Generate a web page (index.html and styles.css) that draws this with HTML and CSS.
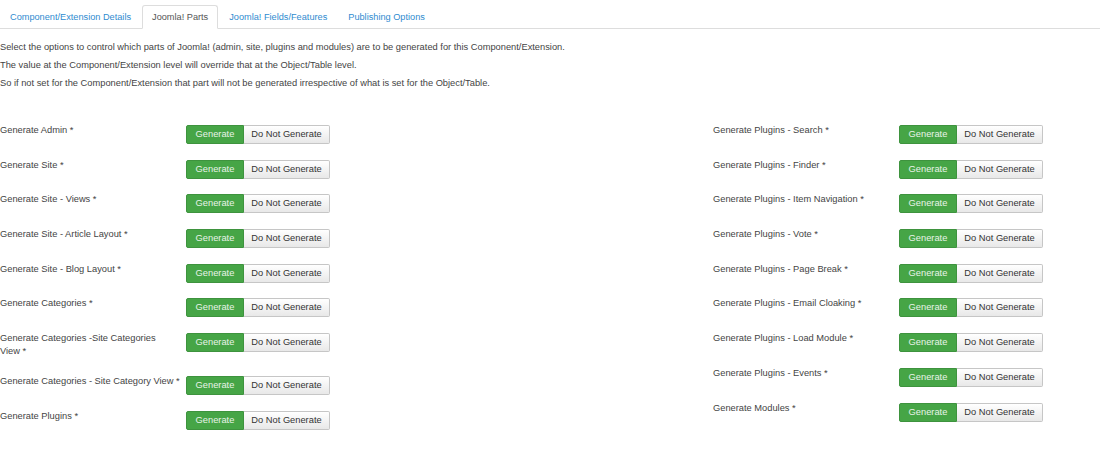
FILE: index.html
```html
<!DOCTYPE html>
<html>
<head>
<meta charset="utf-8">
<link rel="stylesheet" href="styles.css">
</head>
<body>
<ul class="tabs">
  <li class="tab"><a>Component/Extension Details</a></li>
  <li class="tab active"><a>Joomla! Parts</a></li>
  <li class="tab"><a>Joomla! Fields/Features</a></li>
  <li class="tab"><a>Publishing Options</a></li>
</ul>
<div class="intro">
  <p>Select the options to control which parts of Joomla! (admin, site, plugins and modules) are to be generated for this Component/Extension.</p>
  <p>The value at the Component/Extension level will override that at the Object/Table level.</p>
  <p>So if not set for the Component/Extension that part will not be generated irrespective of what is set for the Object/Table.</p>
</div>
<div class="form">
  <div class="col left">
    <div class="group"><div class="label">Generate Admin *</div><div class="btns"><span class="btn on">Generate</span><span class="btn off">Do Not Generate</span></div></div>
    <div class="group"><div class="label">Generate Site *</div><div class="btns"><span class="btn on">Generate</span><span class="btn off">Do Not Generate</span></div></div>
    <div class="group"><div class="label">Generate Site - Views *</div><div class="btns"><span class="btn on">Generate</span><span class="btn off">Do Not Generate</span></div></div>
    <div class="group"><div class="label">Generate Site - Article Layout *</div><div class="btns"><span class="btn on">Generate</span><span class="btn off">Do Not Generate</span></div></div>
    <div class="group"><div class="label">Generate Site - Blog Layout *</div><div class="btns"><span class="btn on">Generate</span><span class="btn off">Do Not Generate</span></div></div>
    <div class="group"><div class="label">Generate Categories *</div><div class="btns"><span class="btn on">Generate</span><span class="btn off">Do Not Generate</span></div></div>
    <div class="group"><div class="label">Generate Categories -Site Categories<br>View *</div><div class="btns"><span class="btn on">Generate</span><span class="btn off">Do Not Generate</span></div></div>
    <div class="group"><div class="label">Generate Categories - Site Category View *</div><div class="btns"><span class="btn on">Generate</span><span class="btn off">Do Not Generate</span></div></div>
    <div class="group"><div class="label">Generate Plugins *</div><div class="btns"><span class="btn on">Generate</span><span class="btn off">Do Not Generate</span></div></div>
  </div>
  <div class="col right">
    <div class="group"><div class="label">Generate Plugins - Search *</div><div class="btns"><span class="btn on">Generate</span><span class="btn off">Do Not Generate</span></div></div>
    <div class="group"><div class="label">Generate Plugins - Finder *</div><div class="btns"><span class="btn on">Generate</span><span class="btn off">Do Not Generate</span></div></div>
    <div class="group"><div class="label">Generate Plugins - Item Navigation *</div><div class="btns"><span class="btn on">Generate</span><span class="btn off">Do Not Generate</span></div></div>
    <div class="group"><div class="label">Generate Plugins - Vote *</div><div class="btns"><span class="btn on">Generate</span><span class="btn off">Do Not Generate</span></div></div>
    <div class="group"><div class="label">Generate Plugins - Page Break *</div><div class="btns"><span class="btn on">Generate</span><span class="btn off">Do Not Generate</span></div></div>
    <div class="group"><div class="label">Generate Plugins - Email Cloaking *</div><div class="btns"><span class="btn on">Generate</span><span class="btn off">Do Not Generate</span></div></div>
    <div class="group"><div class="label">Generate Plugins - Load Module *</div><div class="btns"><span class="btn on">Generate</span><span class="btn off">Do Not Generate</span></div></div>
    <div class="group"><div class="label">Generate Plugins - Events *</div><div class="btns"><span class="btn on">Generate</span><span class="btn off">Do Not Generate</span></div></div>
    <div class="group"><div class="label">Generate Modules *</div><div class="btns"><span class="btn on">Generate</span><span class="btn off">Do Not Generate</span></div></div>
  </div>
</div>
</body>
</html>
```
FILE: styles.css
```css
html, body {
  margin: 0;
  padding: 0;
  background: #fff;
}
body {
  font-family: "Liberation Sans", Arial, sans-serif;
  font-size: 9.3px;
  color: #444;
}
.tabs {
  list-style: none;
  margin: 0;
  padding: 5px 0 0 0;
  display: flex;
  gap: 1px;
  border-bottom: 1px solid #dddddd;
  height: 23px;
  font-size: 9.2px;
}
.tab {
  margin-bottom: -1px;
}
.tab a {
  display: block;
  padding: 0 9px;
  line-height: 22px;
  height: 22px;
  color: #2f8bd0;
  border: 1px solid transparent;
  border-radius: 3px 3px 0 0;
}
.tab.active a {
  color: #555;
  border-color: #dddddd;
  border-bottom-color: #fff;
  background: #fff;
}
.intro {
  padding-top: 9px;
}
.intro p {
  margin: 0;
  line-height: 18px;
}
.form {
  margin-top: 29px;
  display: grid;
  grid-template-columns: 713px 1fr;
}
.group {
  display: flex;
  align-items: flex-start;
  margin-bottom: 11.7px;
  min-height: 23px;
}
.label {
  width: 180px;
  margin-right: 6px;
  padding-top: 3px;
  line-height: 12.5px;
  padding-bottom: 3px;
}
.btns {
  display: flex;
  margin-top: 4px;
}
.btn {
  display: block;
  height: 17px;
  line-height: 17px;
  border: 1px solid #c6c6c6;
  font-size: 9.3px;
}
.btn.on {
  width: 56px;
  text-align: center;
  background: #46a546;
  border-color: #3e933e;
  color: #e8f3e8;
  border-radius: 2px 0 0 2px;
}
.btn.off {
  width: 85px;
  text-align: center;
  color: #333;
  border-left: none;
  background: linear-gradient(#ffffff, #e8e8e8);
  border-radius: 0 2px 2px 0;
}
```
